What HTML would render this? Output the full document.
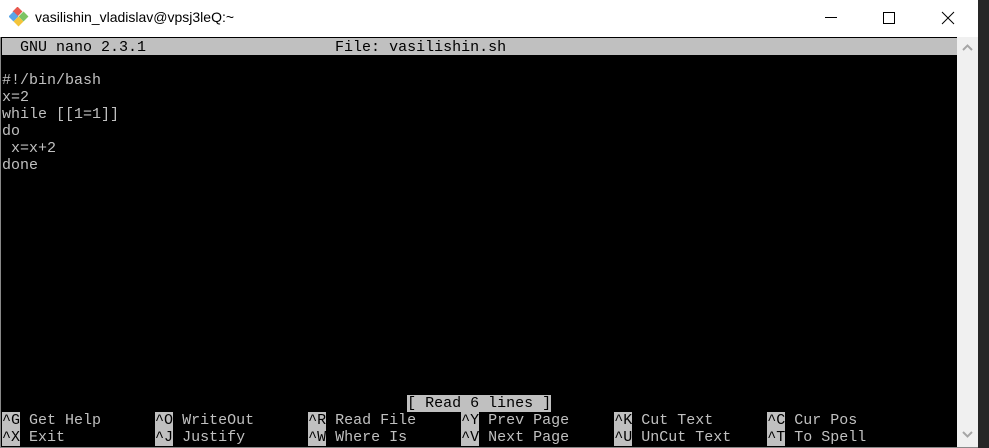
<!DOCTYPE html>
<html><head><style>
html,body{margin:0;padding:0;width:989px;height:448px;overflow:hidden;background:#fff;font-family:"Liberation Sans",sans-serif}
.rdark{position:absolute;left:978px;top:0;width:11px;height:448px;background:#262626}
.title{position:absolute;left:35px;top:9px;font-size:14px;color:#000}
.term{position:absolute;left:1px;top:37px;width:956px;height:410px;background:#000;border-top:1px solid #000}
.sb{position:absolute;left:957px;top:37px;width:21px;height:410px;background:#f0f0f0}
.bot{position:absolute;left:0;top:447px;width:978px;height:1px;background:#888}
.lft{position:absolute;left:0;top:37px;width:1px;height:411px;background:#888}
pre{position:absolute;left:2px;margin:0;font-family:"Liberation Mono",monospace;font-size:15px;line-height:17px;color:#c0c0c0;white-space:pre}
.hl{background:#c0c0c0;color:#000}
.hdr{position:absolute;left:2px;top:38px;width:955px;height:17px;background:#c0c0c0}
</style></head><body>
<div class="rdark"></div>
<svg style="position:absolute;left:9px;top:7px" width="20" height="20" viewBox="0 0 20 20">
<rect x="5" y="1" width="7" height="7" transform="rotate(45 8.5 4.5)" fill="#e8584e"/>
<rect x="1" y="6" width="7" height="7" transform="rotate(45 4.5 9.5)" fill="#5aa5e6"/>
<rect x="11" y="6" width="7" height="7" transform="rotate(45 14.5 9.5)" fill="#7cc464"/>
<rect x="6" y="11" width="7" height="7" transform="rotate(45 9.5 14.5)" fill="#f3c43a"/>
</svg>
<div class="title">vasilishin_vladislav@vpsj3leQ:~</div>
<div style="position:absolute;left:825px;top:17px;width:12px;height:1px;background:#000"></div>
<div style="position:absolute;left:883px;top:12px;width:10px;height:10px;border:1px solid #000"></div>
<svg style="position:absolute;left:941px;top:11px" width="14" height="14"><path d="M1 1L13 13M13 1L1 13" stroke="#000" stroke-width="1"/></svg>
<div class="term"></div>
<div class="lft"></div>
<div class="sb"><svg style="position:absolute;left:5px;top:7px" width="11" height="7"><path d="M1 6L5.5 1.5L10 6" stroke="#a6a6a6" stroke-width="2" fill="none"/></svg>
<svg style="position:absolute;left:5px;top:394px" width="11" height="7"><path d="M1 1L5.5 5.5L10 1" stroke="#a6a6a6" stroke-width="2" fill="none"/></svg></div>
<div class="bot"></div>
<div class="hdr"></div>
<pre style="top:39px;color:#000">  GNU nano 2.3.1                     File: vasilishin.sh</pre>
<pre style="top:72px">#!/bin/bash
x=2
while [[1=1]]
do
 x=x+2
done</pre>
<pre style="top:395px">                                             <span class="hl">[ Read 6 lines ]</span></pre>
<pre style="top:412px"><span class="hl">^G</span> Get Help      <span class="hl">^O</span> WriteOut      <span class="hl">^R</span> Read File     <span class="hl">^Y</span> Prev Page     <span class="hl">^K</span> Cut Text      <span class="hl">^C</span> Cur Pos</pre>
<pre style="top:429px"><span class="hl">^X</span> Exit          <span class="hl">^J</span> Justify       <span class="hl">^W</span> Where Is      <span class="hl">^V</span> Next Page     <span class="hl">^U</span> UnCut Text    <span class="hl">^T</span> To Spell</pre>
</body></html>
